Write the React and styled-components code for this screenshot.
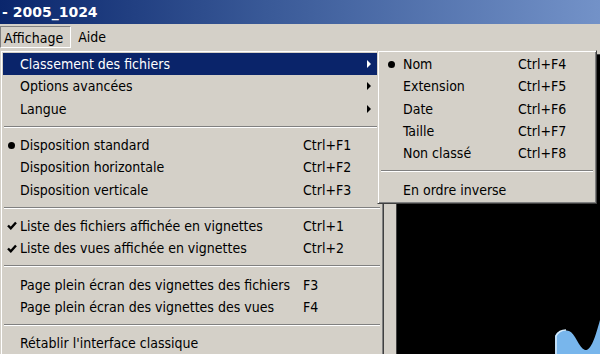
import React from "react";
import styled, { createGlobalStyle } from "styled-components";

const GlobalStyle = createGlobalStyle`
  html, body {
    margin: 0;
    padding: 0;
    background: #d4d0c8;
  }
  body {
    font-family: "DejaVu Sans Condensed", "DejaVu Sans", sans-serif;
  }
`;

const Window = styled.div`
  width: 600px;
  height: 354px;
  overflow: hidden;
  display: flex;
  flex-direction: column;
  background: #d4d0c8;
  color: #000;
  font-size: 14px;
`;

const TitleBar = styled.div`
  height: 24px;
  flex-shrink: 0;
  display: flex;
  align-items: center;
  padding-left: 2px;
  background: linear-gradient(90deg, #0a266c 0%, #3a5a98 45%, #7392c8 100%);
  color: #fff;
  font-family: "DejaVu Sans", sans-serif;
  font-weight: bold;
  font-size: 14px;
`;

const MenuBar = styled.div`
  height: 26px;
  flex-shrink: 0;
  display: flex;
  align-items: center;
`;

const MenuBarItem = styled.div`
  height: 19px;
  display: flex;
  align-items: center;
  border: 1px solid;
  border-color: ${(p) =>
    p.$open ? "#808080 #fff #fff #808080" : "transparent"};
  padding: ${(p) => (p.$open ? "1px 7px 0 3px" : "0 6px")};
`;

const Workspace = styled.div`
  flex: 1;
  position: relative;
  display: flex;
  padding-top: 4px;
`;

const SidePane = styled.div`
  width: 396px;
  flex-shrink: 0;
`;

const Viewer = styled.div`
  flex: 1;
  background: #000;
  border-left: 1px solid #404040;
  border-top: 1px solid #404040;
  display: flex;
  align-items: flex-end;
  justify-content: flex-end;
`;

const Dropdown = styled.div`
  position: absolute;
  top: 0;
  left: 0;
  width: 378px;
  padding: 2px;
  background: #d4d0c8;
  border: 1px solid;
  border-color: #d4d0c8 #404040 #404040 #d4d0c8;
  box-shadow: inset 1px 1px #fff, inset -1px -1px #808080;
  z-index: 2;
`;

const Submenu = styled(Dropdown)`
  top: -3px;
  left: calc(100% - 4px);
  width: 214px;
  color: #000;
`;

const Item = styled.div`
  position: relative;
  height: 22.3px;
  display: grid;
  grid-template-columns: ${(p) => p.$cols};
  align-items: center;
  background: ${(p) => (p.$active ? "#0a246a" : "transparent")};
  color: ${(p) => (p.$active ? "#fff" : "#000")};
  white-space: nowrap;
`;

const Mark = styled.span`
  display: flex;
  justify-content: center;
  align-items: center;
`;

const Bullet = styled.span`
  width: 7px;
  height: 7px;
  border-radius: 50%;
  background: currentColor;
`;

const Arrow = styled.span`
  width: 0;
  height: 0;
  border-left: 4px solid currentColor;
  border-top: 4px solid transparent;
  border-bottom: 4px solid transparent;
`;

const Separator = styled.div`
  height: 14px;
  display: flex;
  align-items: center;
  padding: 0 1px;
  &::after {
    content: "";
    flex: 1;
    height: 0;
    border-top: 1px solid #808080;
    border-bottom: 1px solid #fff;
  }
`;

const Check = () => (
  <svg width="10" height="9" viewBox="0 0 10 9">
    <path d="M1 4.5 L3.8 7.3 L9 1.5" fill="none" stroke="currentColor" strokeWidth="2.4" />
  </svg>
);

const Blob = () => (
  <svg width="45" height="36" viewBox="0 0 45 36">
    <path
      d="M0 36 L0 18 C2 13 8 11 14 13 C20 15 24 30 30 32 C36 33 40 20 45 2 L45 36 Z"
      fill="#78b6ec"
    />
    <path d="M1 36 L1 18 C3 14 7 12 11 12" fill="none" stroke="#d6ecfc" strokeWidth="1.5" />
  </svg>
);

const mainItems = [
  { label: "Classement des fichiers", sub: true, active: true },
  { label: "Options avancées", sub: true },
  { label: "Langue", sub: true },
  { sep: true },
  { label: "Disposition standard", mark: "bullet", key: "Ctrl+F1" },
  { label: "Disposition horizontale", key: "Ctrl+F2" },
  { label: "Disposition verticale", key: "Ctrl+F3" },
  { sep: true },
  { label: "Liste des fichiers affichée en vignettes", mark: "check", key: "Ctrl+1" },
  { label: "Liste des vues affichée en vignettes", mark: "check", key: "Ctrl+2" },
  { sep: true },
  { label: "Page plein écran des vignettes des fichiers", key: "F3" },
  { label: "Page plein écran des vignettes des vues", key: "F4" },
  { sep: true },
  { label: "Rétablir l'interface classique" },
];

const subItems = [
  { label: "Nom", mark: "bullet", key: "Ctrl+F4" },
  { label: "Extension", key: "Ctrl+F5" },
  { label: "Date", key: "Ctrl+F6" },
  { label: "Taille", key: "Ctrl+F7" },
  { label: "Non classé", key: "Ctrl+F8" },
  { sep: true },
  { label: "En ordre inverse" },
];

const renderMark = (mark) => {
  if (mark === "bullet") return <Bullet />;
  if (mark === "check") return <Check />;
  return null;
};

const SortMenu = () => (
  <Submenu>
    {subItems.map((it, i) =>
      it.sep ? (
        <Separator key={i} />
      ) : (
        <Item key={i} $cols="23px 115px 1fr">
          <Mark>{renderMark(it.mark)}</Mark>
          <span>{it.label}</span>
          <span>{it.key}</span>
        </Item>
      )
    )}
  </Submenu>
);

const App = () => {
  return (
    <Window>
      <GlobalStyle />
      <TitleBar>- 2005_1024</TitleBar>
      <MenuBar>
        <MenuBarItem $open>Affichage</MenuBarItem>
        <MenuBarItem>Aide</MenuBarItem>
      </MenuBar>
      <Workspace>
        <SidePane />
        <Viewer>
          <Blob />
        </Viewer>
        <Dropdown>
          {mainItems.map((it, i) =>
            it.sep ? (
              <Separator key={i} />
            ) : (
              <Item key={i} $active={it.active} $cols="17px 283px 1fr 14px">
                <Mark>{renderMark(it.mark)}</Mark>
                <span>{it.label}</span>
                <span>{it.key}</span>
                {it.sub ? <Arrow /> : <span />}
                {it.active && <SortMenu />}
              </Item>
            )
          )}
        </Dropdown>
      </Workspace>
    </Window>
  );
};

export default App;
